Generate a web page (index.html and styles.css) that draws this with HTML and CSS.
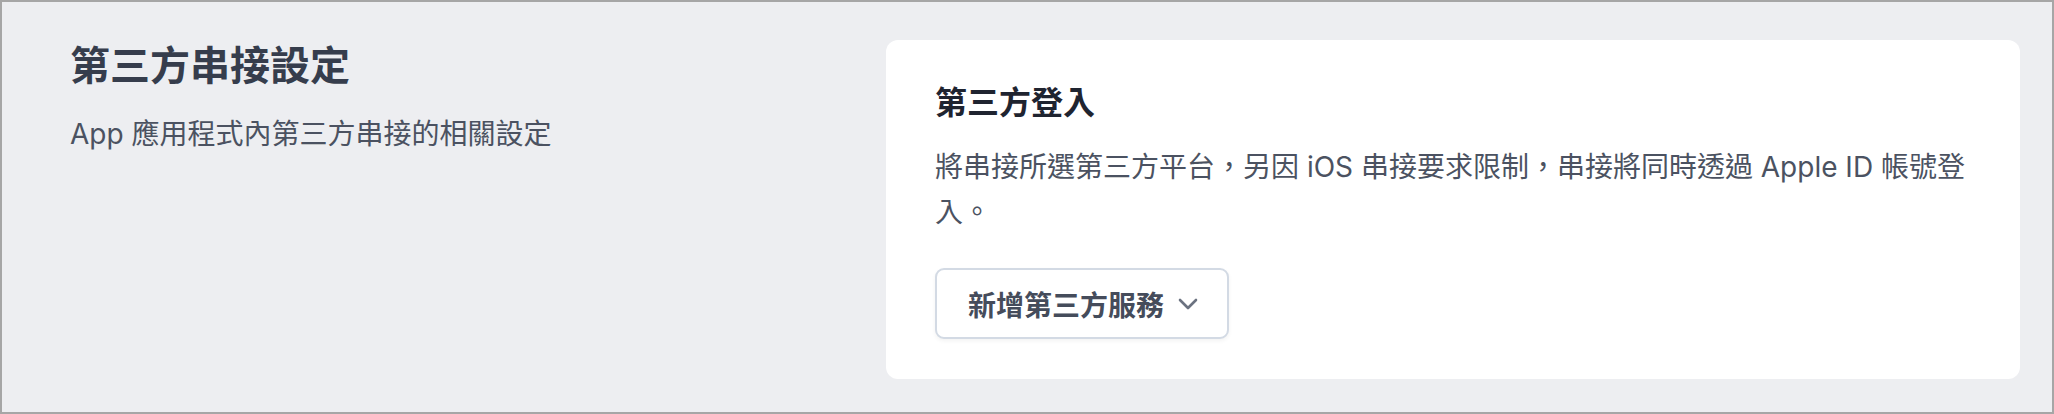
FILE: index.html
```html
<!DOCTYPE html>
<html lang="zh-Hant">
<head>
    <meta charset="UTF-8">
    <meta name="viewport" content="width=device-width, initial-scale=1.0">
    <title>第三方串接設定</title>
    <link rel="stylesheet" href="styles.css">
</head>
<body>
    <div class="frame">
        <section class="intro">
            <h1>第三方串接設定</h1>
            <p>App 應用程式內第三方串接的相關設定</p>
        </section>

        <section class="card">
            <h2>第三方登入</h2>
            <p>將串接所選第三方平台，另因 iOS 串接要求限制，串接將同時透過 Apple ID 帳號登入。</p>
            <button class="add-button" type="button">
                <span>新增第三方服務</span>
                <svg width="20" height="12" viewBox="0 0 20 12" fill="none">
                    <polyline points="2,2 10,10 18,2" stroke="#6b7280" stroke-width="2.6" stroke-linecap="round" stroke-linejoin="round"/>
                </svg>
            </button>
        </section>
    </div>
</body>
</html>
```

FILE: styles.css
```css
* {
    box-sizing: border-box;
}

html, body {
    margin: 0;
    padding: 0;
}

body {
    width: 2054px;
    height: 414px;
    font-family: 'Inter', 'Noto Sans CJK TC', sans-serif;
    background: #edeef1;
    border: 2px solid #a6a6a6;
    overflow: hidden;
}

.frame {
    display: flex;
    align-items: flex-start;
    padding: 38px 32px 33px 68px;
    height: 100%;
}

.intro {
    width: 816px;
    flex-shrink: 0;
}

.intro h1 {
    margin: 0;
    font-size: 40px;
    line-height: 52px;
    font-weight: 700;
    color: #363d4c;
}

.intro p {
    margin: 20px 0 0;
    font-size: 28px;
    line-height: 45px;
    color: #4b5261;
}

.card {
    flex: 1;
    background: #fff;
    border-radius: 12px;
    padding: 40px 49px;
    height: 339px;
}

.card h2 {
    margin: 0;
    font-size: 32px;
    line-height: 45px;
    font-weight: 700;
    color: #1f2430;
}

.card p {
    margin: 20px 0 0;
    font-size: 28px;
    line-height: 45px;
    color: #4b5261;
}

.add-button {
    display: inline-flex;
    align-items: center;
    gap: 14px;
    margin-top: 33px;
    height: 71px;
    padding: 0 29px 0 31px;
    font-family: inherit;
    font-size: 28px;
    font-weight: 700;
    color: #454c5b;
    background: #fff;
    border: 2px solid #d3dae4;
    border-radius: 9px;
    box-shadow: 0 2px 4px rgba(0, 0, 0, 0.05);
    cursor: pointer;
}
```
